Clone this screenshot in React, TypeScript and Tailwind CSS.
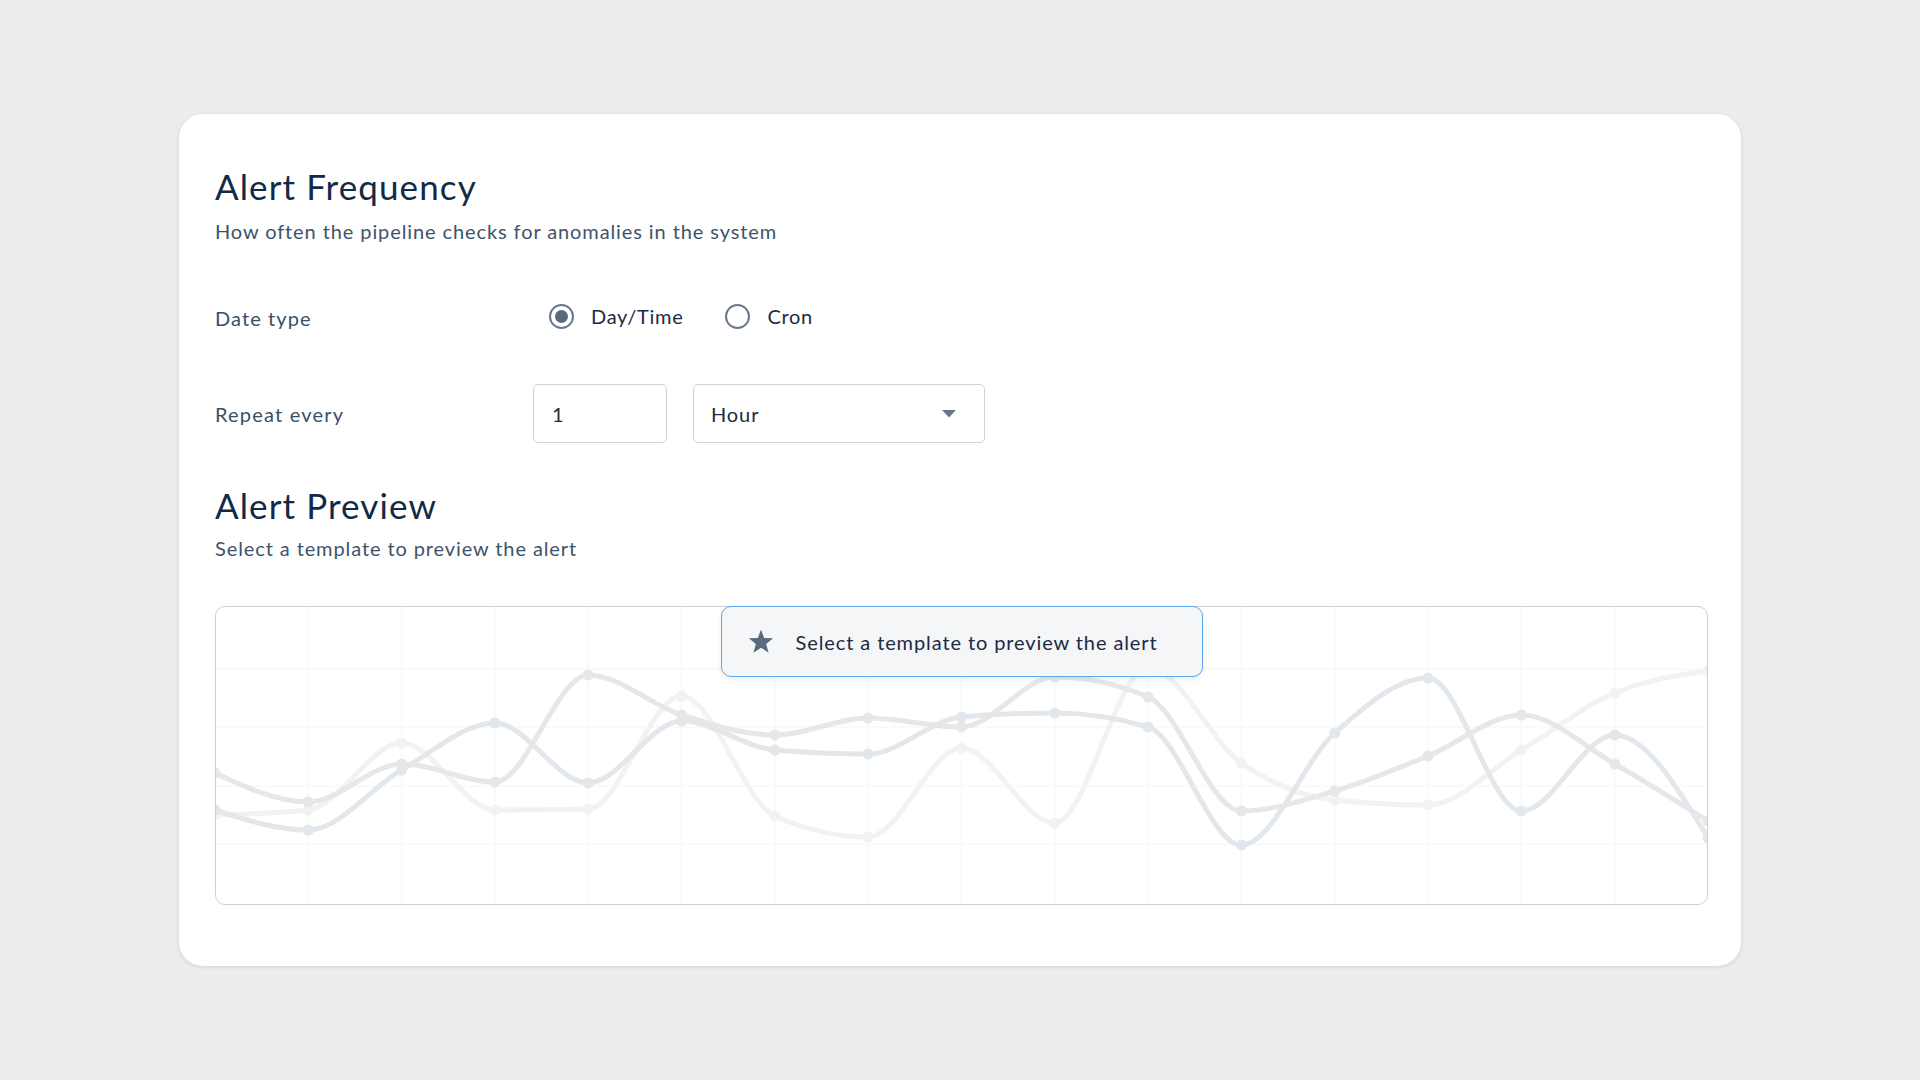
import React from "react";

const XS = 1493 / 16;
const TOP = 606;
const A = [810, 830, 770, 723, 783, 721, 750, 754, 717, 713, 727, 845, 733, 678, 811, 735, 838];
const B = [773, 802, 764, 782, 675, 715, 735, 718, 727, 677, 697, 811, 791, 756, 715, 764, 821];
const C = [815, 810, 743, 810, 809, 696, 816, 837, 748, 823, 668, 763, 800, 805, 750, 693, 671];

function monotonePath(ysAbs: number[]): string {
  const pts = ysAbs.map((y, i) => [i * XS, y - TOP] as [number, number]);
  const n = pts.length;
  const t: number[] = new Array(n).fill(0);
  const sign = (v: number) => (v < 0 ? -1 : 1);
  for (let i = 1; i < n - 1; i++) {
    const [x0, y0] = pts[i - 1];
    const [x1, y1] = pts[i];
    const [x2, y2] = pts[i + 1];
    const h0 = x1 - x0;
    const h1 = x2 - x1;
    const s0 = (y1 - y0) / h0;
    const s1 = (y2 - y1) / h1;
    const p = (s0 * h1 + s1 * h0) / (h0 + h1);
    t[i] = (sign(s0) + sign(s1)) * Math.min(Math.abs(s0), Math.abs(s1), 0.5 * Math.abs(p)) || 0;
  }
  {
    const h = pts[1][0] - pts[0][0];
    t[0] = (3 * (pts[1][1] - pts[0][1]) / h - t[1]) / 2;
    const h2 = pts[n - 1][0] - pts[n - 2][0];
    t[n - 1] = (3 * (pts[n - 1][1] - pts[n - 2][1]) / h2 - t[n - 2]) / 2;
  }
  let d = `M${pts[0][0]},${pts[0][1]}`;
  for (let i = 0; i < n - 1; i++) {
    const [x0, y0] = pts[i];
    const [x1, y1] = pts[i + 1];
    const dx = (x1 - x0) / 3;
    d += ` C${x0 + dx},${y0 + dx * t[i]} ${x1 - dx},${y1 - dx * t[i + 1]} ${x1},${y1}`;
  }
  return d;
}

function Series({ ys, color }: { ys: number[]; color: string }) {
  return (
    <g>
      <path d={monotonePath(ys)} fill="none" stroke={color} strokeWidth={5} strokeLinecap="round" />
      {ys.map((y, i) => (
        <circle key={i} cx={i * XS} cy={y - TOP} r={5.5} fill={color} />
      ))}
    </g>
  );
}

function Chart() {
  const vLines = Array.from({ length: 15 }, (_, i) => (i + 1) * XS);
  const hLines = [63, 121, 180, 238];
  return (
    <svg width="1493" height="299" viewBox="0 0 1493 299" className="block">
      {vLines.map((x, i) => (
        <line key={"v" + i} x1={x} y1={0} x2={x} y2={299} stroke="#f4f5f6" strokeWidth={1} />
      ))}
      {hLines.map((y, i) => (
        <line key={"h" + i} x1={0} y1={y} x2={1493} y2={y} stroke="#f4f5f6" strokeWidth={1} />
      ))}
      <Series ys={C} color="#f2f2f2" />
      <Series ys={B} color="#e7e7e8" />
      <Series ys={A} color="#e2e7ec" />
    </svg>
  );
}

function Radio({ checked, label }: { checked: boolean; label: string }) {
  return (
    <div className="flex items-center">
      <span className="flex h-[25px] w-[25px] items-center justify-center rounded-full border-[2.5px] border-[#687789]">
        {checked && <span className="h-[13px] w-[13px] rounded-full bg-[#5a6a7e]" />}
      </span>
      <span className="ml-[17px] text-[20px] leading-[24px] tracking-[0.7px] text-[#1b2b42]">{label}</span>
    </div>
  );
}

export default function App() {
  return (
    <div
      className="min-h-screen w-full bg-[#ededed] pl-[179px] pt-[114px]"
      style={{ fontFamily: "Lato, 'Noto Sans', sans-serif" }}
    >
      <div className="flex h-[852px] w-[1562px] flex-col rounded-[24px] bg-white pl-[36px] pr-[33px] pt-[55px] shadow-[0_1px_4px_rgba(0,0,0,0.12)]">
        <h1 className="text-[35px] font-normal leading-[35px] tracking-[1.1px] text-[#132a46]">Alert Frequency</h1>
        <p className="mt-[15px] text-[20px] leading-[24px] tracking-[0.9px] text-[#3e536b]">
          How often the pipeline checks for anomalies in the system
        </p>

        <div className="mt-[53px] flex h-[40px] items-center">
          <div className="mt-[4px] w-[318px] text-[20px] leading-[24px] tracking-[1.1px] text-[#3a4f67]">Date type</div>
          <div className="flex items-center gap-[42px] pl-[16px]">
            <Radio checked label="Day/Time" />
            <Radio checked={false} label="Cron" />
          </div>
        </div>

        <div className="mt-[48px] flex h-[59px] items-center">
          <div className="w-[318px] text-[20px] leading-[24px] tracking-[1.2px] text-[#3a4f67]">Repeat every</div>
          <div className="flex h-[59px] w-[134px] items-center rounded-[5px] border-[1.5px] border-[#cfd4da] pl-[18px] text-[20px] text-[#1b2b42]">
            1
          </div>
          <div className="ml-[26px] flex h-[59px] w-[292px] items-center justify-between rounded-[5px] border-[1.5px] border-[#cfd4da] pl-[17px] pr-[28px] text-[20px] tracking-[0.9px] text-[#1b2b42]">
            <span>Hour</span>
            <svg width="14" height="8" viewBox="0 0 14 8">
              <path d="M0 0 L14 0 L7 7.5 Z" fill="#67768a" />
            </svg>
          </div>
        </div>

        <h2 className="mt-[45px] text-[35px] font-normal leading-[35px] tracking-[1.1px] text-[#132a46]">Alert Preview</h2>
        <p className="mt-[13px] text-[20px] leading-[24px] tracking-[0.9px] text-[#3e536b]">
          Select a template to preview the alert
        </p>

        <div className="relative mt-[46px] h-[299px] w-[1493px] overflow-hidden rounded-[10px] border-[1.5px] border-[#cbd0d6]">
          <div className="absolute -left-[1.5px] -top-[1.5px]">
            <Chart />
          </div>
        </div>
        <div className="relative h-0 w-[1493px]">
          <div className="absolute left-1/2 top-[-299px] flex h-[71px] w-[482px] -translate-x-1/2 items-center rounded-[10px] border-[1.5px] border-[#5ba8ef] bg-[#f4f6f7] pl-[26px] shadow-[0_2px_6px_rgba(0,0,0,0.08)]">
            <svg width="26" height="25" viewBox="0 0 24 23">
              <path
                d="M12 0.5 L14.9 8.3 L23.2 8.6 L16.7 13.8 L19 21.8 L12 17.2 L5 21.8 L7.3 13.8 L0.8 8.6 L9.1 8.3 Z"
                fill="#5a6a7e"
              />
            </svg>
            <span className="ml-[22px] text-[20px] leading-[24px] tracking-[0.9px] text-[#1b2b42]">
              Select a template to preview the alert
            </span>
          </div>
        </div>
      </div>
    </div>
  );
}
